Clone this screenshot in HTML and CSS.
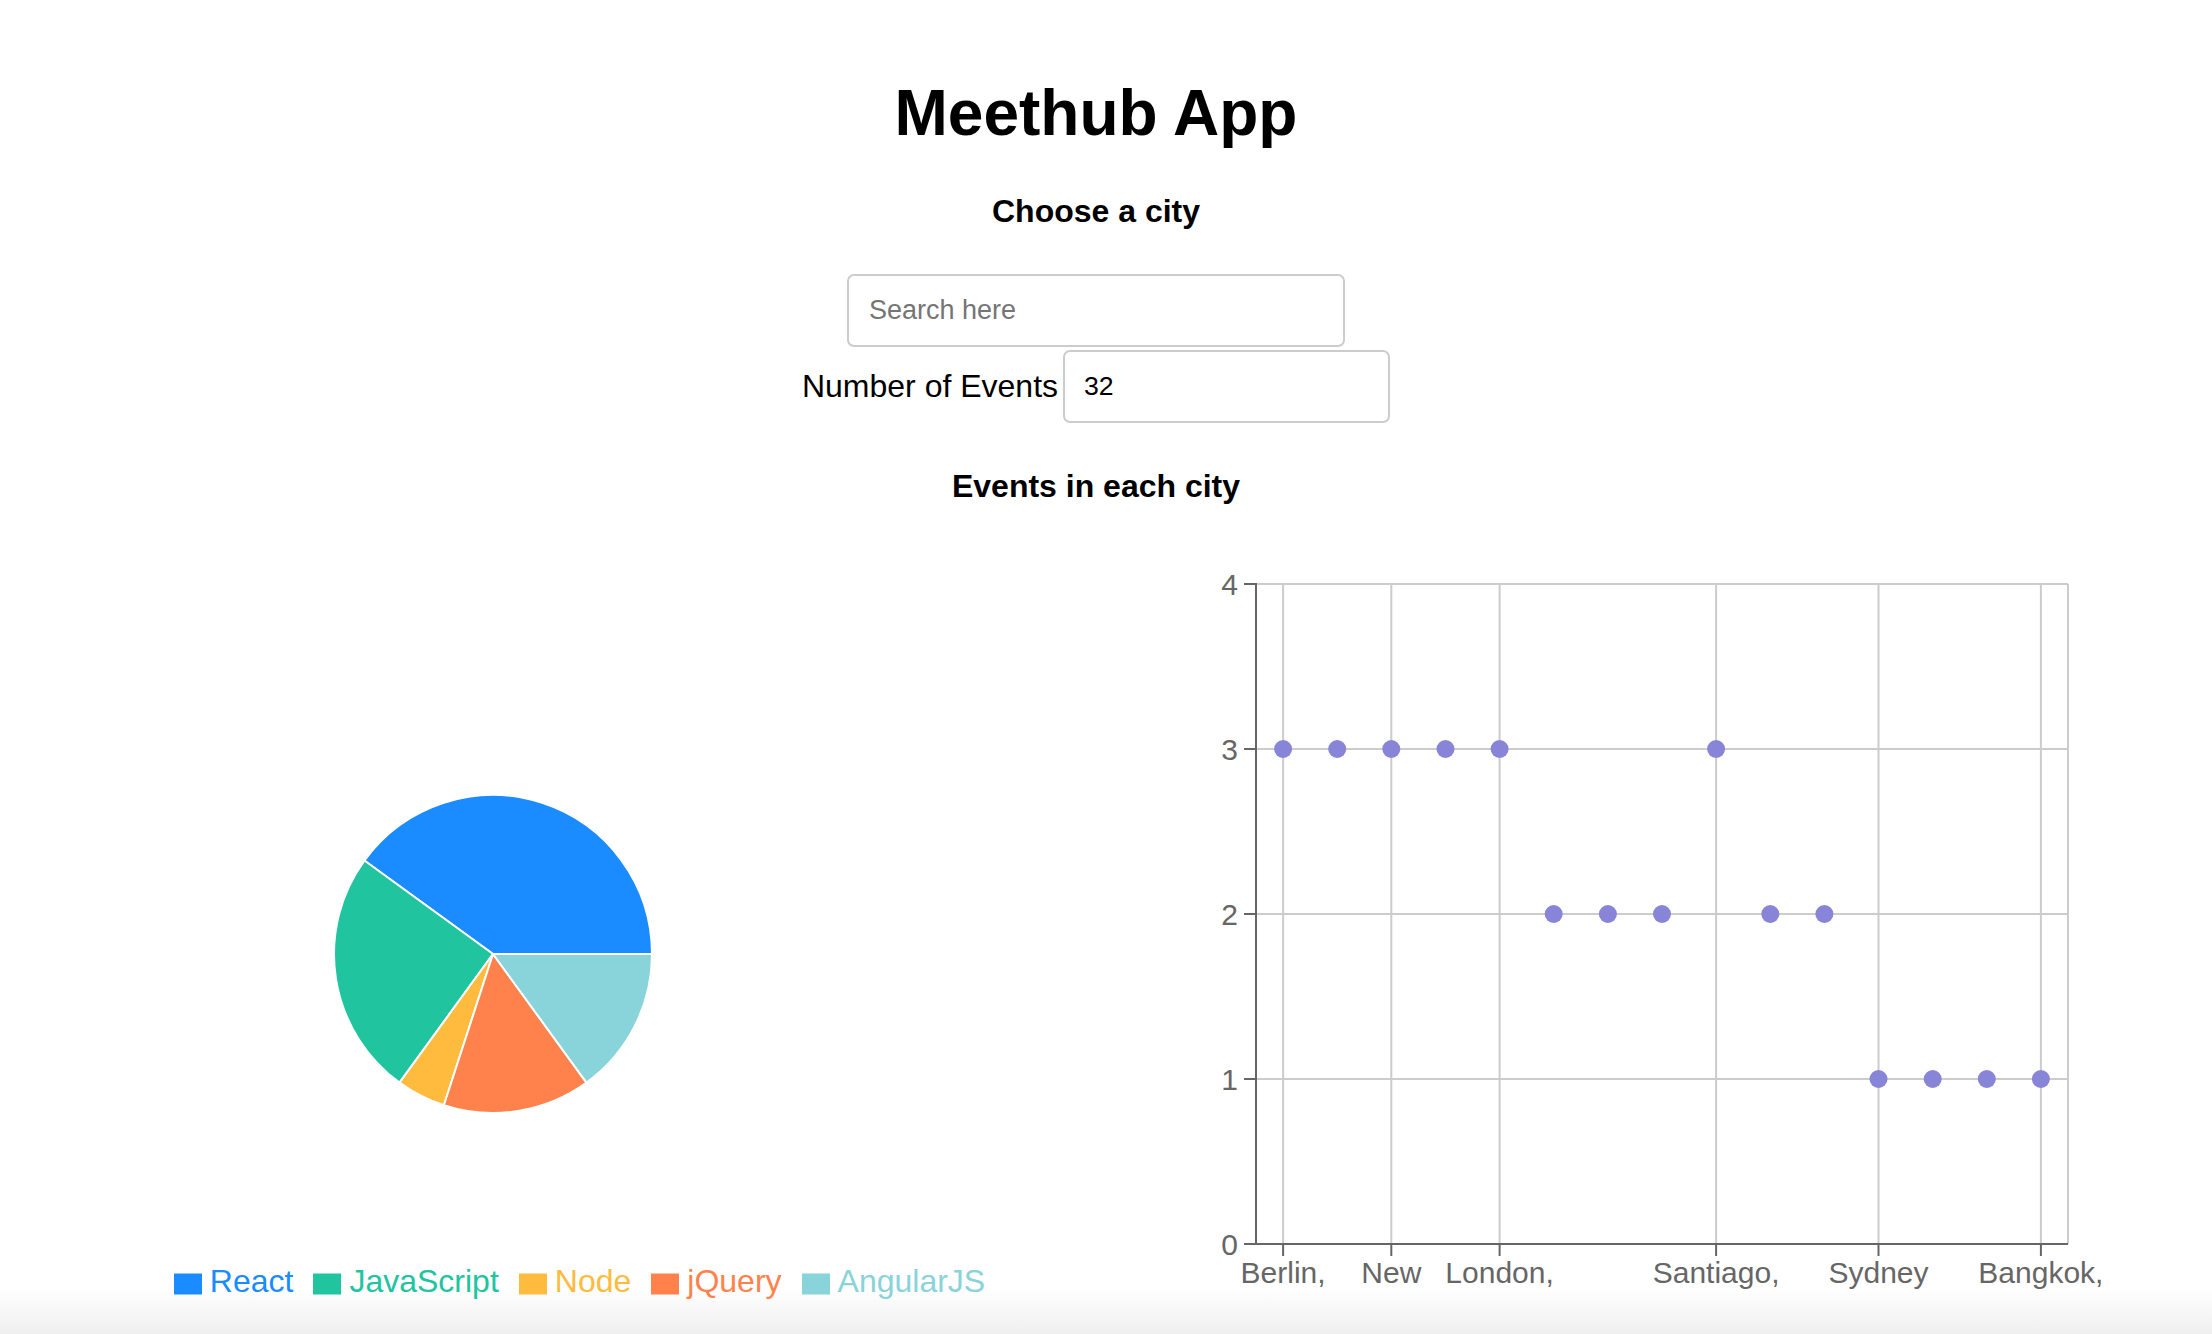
FILE: index.html
```html
<!DOCTYPE html>
<html lang="en">
<head>
<meta charset="utf-8">
<title>Meethub App</title>
<link rel="stylesheet" href="styles.css">
</head>
<body>
<div class="app">
  <h1 class="title">Meethub App</h1>
  <h3 class="subtitle">Choose a city</h3>
  <div class="city-search">
    <input class="search-input" type="text" placeholder="Search here">
  </div>
  <div class="events-row">
    <label class="events-label" for="number-of-events">Number of Events</label>
    <input id="number-of-events" class="events-input" type="text" value="32">
  </div>
  <h4 class="section-title">Events in each city</h4>
  <div class="charts">
    <div class="chart-col">
      <svg class="pie" width="1096" height="723" viewBox="0 0 1096 723">
        <g stroke="#fff" stroke-width="2" stroke-linejoin="round">
          <path fill="#1a8cff" d="M493,414 L652,414 A159,159 0 0 0 364.37,320.54 Z"/>
          <path fill="#20c49f" d="M493,414 L364.37,320.54 A159,159 0 0 0 399.54,542.63 Z"/>
          <path fill="#ffbb3d" d="M493,414 L399.54,542.63 A159,159 0 0 0 443.87,565.22 Z"/>
          <path fill="#ff824c" d="M493,414 L443.87,565.22 A159,159 0 0 0 586.46,542.63 Z"/>
          <path fill="#89d3da" d="M493,414 L586.46,542.63 A159,159 0 0 0 652,414 Z"/>
        </g>
      </svg>
      <ul class="legend">
        <li class="legend-item legend-react"><svg class="legend-icon" width="28" height="28" viewBox="0 0 28 28"><rect x="0" y="5.5" width="28" height="21" fill="#1a8cff"/></svg><span>React</span></li>
        <li class="legend-item legend-js"><svg class="legend-icon" width="28" height="28" viewBox="0 0 28 28"><rect x="0" y="5.5" width="28" height="21" fill="#20c49f"/></svg><span>JavaScript</span></li>
        <li class="legend-item legend-node"><svg class="legend-icon" width="28" height="28" viewBox="0 0 28 28"><rect x="0" y="5.5" width="28" height="21" fill="#ffbb3d"/></svg><span>Node</span></li>
        <li class="legend-item legend-jquery"><svg class="legend-icon" width="28" height="28" viewBox="0 0 28 28"><rect x="0" y="5.5" width="28" height="21" fill="#ff824c"/></svg><span>jQuery</span></li>
        <li class="legend-item legend-angular"><svg class="legend-icon" width="28" height="28" viewBox="0 0 28 28"><rect x="0" y="5.5" width="28" height="21" fill="#89d3da"/></svg><span>AngularJS</span></li>
      </ul>
    </div>
    <div class="chart-col">
      <svg class="scatter" width="1096" height="760" viewBox="0 0 1096 760">
        <g stroke="#ccc" stroke-width="2">
          <line x1="160" y1="44" x2="972" y2="44"/>
          <line x1="160" y1="209" x2="972" y2="209"/>
          <line x1="160" y1="374" x2="972" y2="374"/>
          <line x1="160" y1="539" x2="972" y2="539"/>
          <line x1="187.1" y1="44" x2="187.1" y2="704"/>
          <line x1="295.3" y1="44" x2="295.3" y2="704"/>
          <line x1="403.6" y1="44" x2="403.6" y2="704"/>
          <line x1="620.1" y1="44" x2="620.1" y2="704"/>
          <line x1="782.5" y1="44" x2="782.5" y2="704"/>
          <line x1="944.9" y1="44" x2="944.9" y2="704"/>
          <line x1="972" y1="44" x2="972" y2="704"/>
        </g>
        <g stroke="#666" stroke-width="2">
          <line x1="160" y1="43" x2="160" y2="705"/>
          <line x1="148" y1="44" x2="160" y2="44"/>
          <line x1="148" y1="209" x2="160" y2="209"/>
          <line x1="148" y1="374" x2="160" y2="374"/>
          <line x1="148" y1="539" x2="160" y2="539"/>
          <line x1="148" y1="704" x2="160" y2="704"/>
          <line x1="159" y1="704" x2="972" y2="704"/>
          <line x1="187.1" y1="704" x2="187.1" y2="716"/>
          <line x1="295.3" y1="704" x2="295.3" y2="716"/>
          <line x1="403.6" y1="704" x2="403.6" y2="716"/>
          <line x1="620.1" y1="704" x2="620.1" y2="716"/>
          <line x1="782.5" y1="704" x2="782.5" y2="716"/>
          <line x1="944.9" y1="704" x2="944.9" y2="716"/>
        </g>
        <g class="axis-text" text-anchor="end">
          <text x="142" y="44" dy="0.355em">4</text>
          <text x="142" y="209" dy="0.355em">3</text>
          <text x="142" y="374" dy="0.355em">2</text>
          <text x="142" y="539" dy="0.355em">1</text>
          <text x="142" y="704" dy="0.355em">0</text>
        </g>
        <g class="axis-text" text-anchor="middle">
          <text x="187.1" y="742.7">Berlin,</text>
          <text x="295.3" y="742.7">New</text>
          <text x="403.6" y="742.7">London,</text>
          <text x="620.1" y="742.7">Santiago,</text>
          <text x="782.5" y="742.7">Sydney</text>
          <text x="944.9" y="742.7">Bangkok,</text>
        </g>
        <g fill="#8884d8">
          <circle cx="187.1" cy="209" r="9"/>
          <circle cx="241.2" cy="209" r="9"/>
          <circle cx="295.3" cy="209" r="9"/>
          <circle cx="349.5" cy="209" r="9"/>
          <circle cx="403.6" cy="209" r="9"/>
          <circle cx="457.7" cy="374" r="9"/>
          <circle cx="511.9" cy="374" r="9"/>
          <circle cx="566.0" cy="374" r="9"/>
          <circle cx="620.1" cy="209" r="9"/>
          <circle cx="674.3" cy="374" r="9"/>
          <circle cx="728.4" cy="374" r="9"/>
          <circle cx="782.5" cy="539" r="9"/>
          <circle cx="836.7" cy="539" r="9"/>
          <circle cx="890.8" cy="539" r="9"/>
          <circle cx="944.9" cy="539" r="9"/>
        </g>
      </svg>
    </div>
  </div>
</div>
</body>
</html>
```

FILE: styles.css
```css
html {
  height: 100%;
  background: linear-gradient(to bottom, #ffffff 0, #ffffff 1288px, #efefef 1334px);
}

body {
  margin: 0;
  font-family: "Liberation Sans", Arial, sans-serif;
  color: #000;
}

.app {
  display: flex;
  flex-direction: column;
  align-items: center;
  padding-right: 20px;
}

.title {
  margin: 81px 0 0;
  font-size: 64px;
  line-height: 64px;
  font-weight: 700;
}

.subtitle {
  margin: 50px 0 0;
  font-size: 32px;
  line-height: 32px;
  font-weight: 700;
}

.city-search {
  margin-top: 46.5px;
}

.search-input,
.events-input {
  box-sizing: border-box;
  height: 73px;
  border: 2px solid #cccccc;
  border-radius: 7px;
  background: #fff;
  font-family: "Liberation Sans", Arial, sans-serif;
  color: #000;
  outline: none;
  margin: 0;
}

.search-input {
  width: 498px;
  padding: 0 20px;
  font-size: 27px;
}

.search-input::placeholder {
  color: #757575;
}

.events-row {
  display: flex;
  align-items: center;
  gap: 5px;
  margin-top: 3px;
}

.events-label {
  font-size: 32px;
  line-height: 36.8px;
}

.events-input {
  width: 327px;
  padding: 0 19px;
  font-size: 26.67px;
}

.section-title {
  margin: 47.3px 0 0;
  font-size: 32px;
  line-height: 32px;
  font-weight: 700;
}

.charts {
  margin-top: 38.7px;
  width: 100%;
  display: grid;
  grid-template-columns: 1fr 1fr;
}

.chart-col {
  display: flex;
  flex-direction: column;
}

.pie,
.scatter {
  display: block;
}

.legend {
  list-style: none;
  margin: 0;
  padding: 0 0 0 63px;
  display: flex;
  justify-content: center;
  gap: 20px;
}

.legend-item {
  display: flex;
  align-items: center;
  gap: 8px;
  font-size: 32px;
  line-height: 36.8px;
}

.legend-icon {
  display: block;
}

.legend-react { color: #1a8cff; }
.legend-js { color: #20c49f; }
.legend-node { color: #ffbb3d; }
.legend-jquery { color: #ff824c; }
.legend-angular { color: #89d3da; }

.axis-text {
  font-family: "Liberation Sans", Arial, sans-serif;
  font-size: 30px;
  fill: #666;
}
```
